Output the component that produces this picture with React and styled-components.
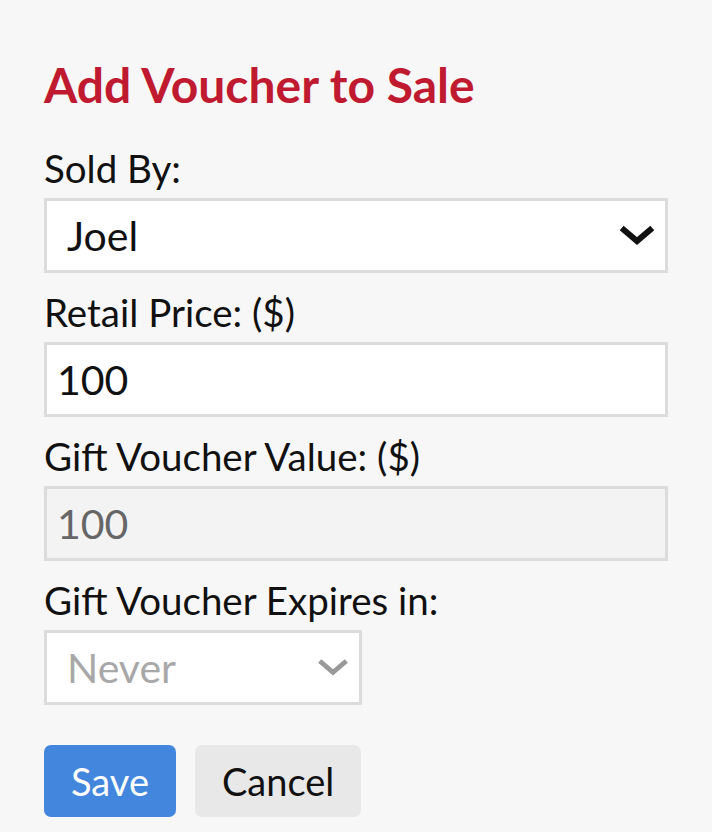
import React from "react";
import styled, { createGlobalStyle } from "styled-components";

const Global = createGlobalStyle`
  html, body { margin: 0; padding: 0; background: #f7f7f7; }
  body { font-family: Lato, "Open Sans", Arial, sans-serif; color: #111; }
`;

const Page = styled.div`
  padding: 56px 44px 0 44px;
  display: flex;
  flex-direction: column;
`;

const Title = styled.h1`
  margin: 0 0 31px 0;
  font-family: Lato, sans-serif;
  font-weight: 700;
  font-size: 48px;
  line-height: 1.2;
  color: #c01a30;
`;

const Form = styled.form`
  display: flex;
  flex-direction: column;
  gap: 16px;
`;

const Field = styled.div`
  display: flex;
  flex-direction: column;
  align-items: ${(p) => (p.$narrow ? "flex-start" : "stretch")};
  gap: 7px;
`;

const Label = styled.label`
  font-family: Lato, sans-serif;
  font-size: 38.5px;
  line-height: 46px;
  color: #111;
`;

const Box = styled.div`
  box-sizing: border-box;
  height: 75px;
  width: ${(p) => (p.$width ? `${p.$width}px` : "100%")};
  border: 3px solid #dcdcdc;
  background: ${(p) => (p.$disabled ? "#f3f3f3" : "#fff")};
  display: flex;
  align-items: center;
  justify-content: space-between;
  padding: ${(p) => (p.$select ? "0 11px 0 20px" : "0 10px")};
  font-family: Lato, sans-serif;
  font-size: 41px;
  color: ${(p) => p.$color || "#111"};
`;

const Chevron = ({ color, size = 34, weight = 5 }) => (
  <svg width={size} height={Math.round(size * 0.6)} viewBox="0 0 34 20">
    <polyline
      points="4,5 17,16 30,5"
      fill="none"
      stroke={color}
      strokeWidth={weight}
      strokeLinecap="square"
      strokeLinejoin="miter"
    />
  </svg>
);

const Actions = styled.div`
  display: flex;
  gap: 19px;
  margin-top: 40px;
`;

const Button = styled.button`
  box-sizing: border-box;
  height: 72px;
  padding: 0 27px;
  border: none;
  border-radius: 7px;
  font-family: Lato, sans-serif;
  font-size: 38px;
  background: ${(p) => (p.$primary ? "#4386dd" : "#e8e8e8")};
  color: ${(p) => (p.$primary ? "#fff" : "#111")};
  cursor: pointer;
`;

export default function App() {
  return (
    <>
      <Global />
      <Page>
        <Title>Add Voucher to Sale</Title>
        <Form onSubmit={(e) => e.preventDefault()}>
          <Field>
            <Label>Sold By:</Label>
            <Box $select>
              <span>Joel</span>
              <Chevron color="#111" size={34} weight={6} />
            </Box>
          </Field>
          <Field>
            <Label>Retail Price: ($)</Label>
            <Box>100</Box>
          </Field>
          <Field>
            <Label>Gift Voucher Value: ($)</Label>
            <Box $disabled $color="#666">100</Box>
          </Field>
          <Field $narrow>
            <Label>Gift Voucher Expires in:</Label>
            <Box $select $width={318} $color="#a8a8a8">
              <span>Never</span>
              <Chevron color="#999" size={30} weight={5.5} />
            </Box>
          </Field>
        </Form>
        <Actions>
          <Button $primary>Save</Button>
          <Button>Cancel</Button>
        </Actions>
      </Page>
    </>
  );
}
